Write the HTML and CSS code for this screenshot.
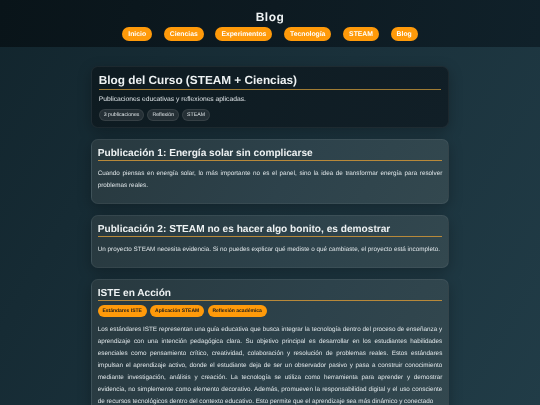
FILE: index.html
```html
<!DOCTYPE html>
<html lang="es">
<head>
<meta charset="utf-8">
<title>Blog</title>
<link rel="stylesheet" href="styles.css">
</head>
<body>
<header class="site-header">
  <div class="site-title">Blog</div>
  <nav class="nav">
    <a class="nav-pill">Inicio</a>
    <a class="nav-pill">Ciencias</a>
    <a class="nav-pill">Experimentos</a>
    <a class="nav-pill">Tecnología</a>
    <a class="nav-pill">STEAM</a>
    <a class="nav-pill">Blog</a>
  </nav>
</header>
<main class="main">
  <section class="hero">
    <h1 class="hero-title">Blog del Curso (STEAM + Ciencias)</h1>
    <p class="hero-text">Publicaciones educativas y reflexiones aplicadas.</p>
    <div class="chips">
      <span class="chip">3 publicaciones</span>
      <span class="chip">Reflexión</span>
      <span class="chip">STEAM</span>
    </div>
  </section>
  <article class="card">
    <h2 class="card-title">Publicación 1: Energía solar sin complicarse</h2>
    <p class="card-text">Cuando piensas en energía solar, lo más importante no es el panel, sino la idea de transformar energía para resolver problemas reales.</p>
  </article>
  <article class="card">
    <h2 class="card-title">Publicación 2: STEAM no es hacer algo bonito, es demostrar</h2>
    <p class="card-text">Un proyecto STEAM necesita evidencia. Si no puedes explicar qué mediste o qué cambiaste, el proyecto está incompleto.</p>
  </article>
  <article class="card">
    <h2 class="card-title">ISTE en Acción</h2>
    <div class="tags">
      <span class="tag">Estándares ISTE</span>
      <span class="tag">Aplicación STEAM</span>
      <span class="tag">Reflexión académica</span>
    </div>
    <p class="card-text">Los estándares ISTE representan una guía educativa que busca integrar la tecnología dentro del proceso de enseñanza y aprendizaje con una intención pedagógica clara. Su objetivo principal es desarrollar en los estudiantes habilidades esenciales como pensamiento crítico, creatividad, colaboración y resolución de problemas reales. Estos estándares impulsan el aprendizaje activo, donde el estudiante deja de ser un observador pasivo y pasa a construir conocimiento mediante investigación, análisis y creación. La tecnología se utiliza como herramienta para aprender y demostrar evidencia, no simplemente como elemento decorativo. Además, promueven la responsabilidad digital y el uso consciente de recursos tecnológicos dentro del contexto educativo. Esto permite que el aprendizaje sea más dinámico y conectado</p>
  </article>
</main>
</body>
</html>
```
FILE: styles.css
```css
* { box-sizing: border-box; }
html, body { margin: 0; padding: 0; }
body {
  height: 405px;
  overflow: hidden;
  font-family: "Liberation Sans", Arial, sans-serif;
  text-rendering: geometricPrecision;
  color: #e8eef0;
  background: linear-gradient(120deg, #12252d 0%, #1a313b 50%, #213c47 100%);
}
.site-header {
  height: 47px;
  padding-top: 10px;
  background: linear-gradient(100deg, #091419 0%, #0d1a21 50%, #10212a 100%);
  text-align: center;
}
.site-title {
  font-size: 12px;
  line-height: 14px;
  font-weight: 700;
  letter-spacing: 0.5px;
  color: #eef2f3;
  filter: blur(0.25px);
}
.nav {
  display: flex;
  justify-content: center;
  gap: 11.7px;
  margin-top: 3px;
  filter: blur(0.25px);
}
.nav-pill {
  display: block;
  height: 14px;
  padding: 0 6px;
  border-radius: 8px;
  background: #ff9a0a;
  color: #fff;
  font-size: 6.8px;
  line-height: 15px;
  font-weight: 700;
}
.main {
  width: 358.6px;
  margin: 19px auto 0;
  display: flex;
  flex-direction: column;
  gap: 11px;
  filter: blur(0.25px);
}
.hero {
  padding: 6px 7px 6.5px;
  border-radius: 7px;
  border: 1px solid rgba(255, 255, 255, 0.06);
  background: linear-gradient(120deg, #0e1b21 0%, #111f27 100%);
  box-shadow: 0 4px 14px rgba(0, 0, 0, 0.25);
}
.hero-title {
  margin: 0;
  padding-bottom: 2px;
  font-size: 11.8px;
  line-height: 14px;
  font-weight: 700;
  color: #eef2f3;
  border-bottom: 1px solid #a07c34;
}
.hero-text {
  margin: 5px 0 0;
  font-size: 6.73px;
  line-height: 10px;
  color: #dfe5e8;
}
.chips {
  display: flex;
  gap: 3px;
  margin-top: 4px;
}
.chip {
  height: 11.5px;
  padding: 0 4px;
  border-radius: 6px;
  border: 1px solid rgba(255, 255, 255, 0.08);
  background: #253036;
  font-size: 5.2px;
  line-height: 11px;
  color: #dfe5e8;
}
.card {
  padding: 6px 6px 11px;
  border-radius: 7px;
  border: 1px solid rgba(255, 255, 255, 0.06);
  background: linear-gradient(120deg, #28393f 0%, #2d424b 55%, #33484f 100%);
  box-shadow: 0 4px 14px rgba(0, 0, 0, 0.25);
}
.card-title {
  margin: 0;
  padding-top: 1px;
  font-size: 10.15px;
  line-height: 13px;
  font-weight: 700;
  color: #eef2f3;
  border-bottom: 1px solid #b8893a;
}
.card-text {
  margin: 7px 0 0;
  font-size: 6.33px;
  line-height: 12px;
  color: #dfe5e8;
  text-align: justify;
}
.tags {
  display: flex;
  gap: 3.8px;
  margin-top: 4px;
}
.tag {
  height: 12px;
  padding: 0 4.7px;
  border-radius: 6px;
  background: #ff9a0a;
  color: #1c1c1c;
  font-size: 5px;
  line-height: 13px;
  font-weight: 700;
}
```
